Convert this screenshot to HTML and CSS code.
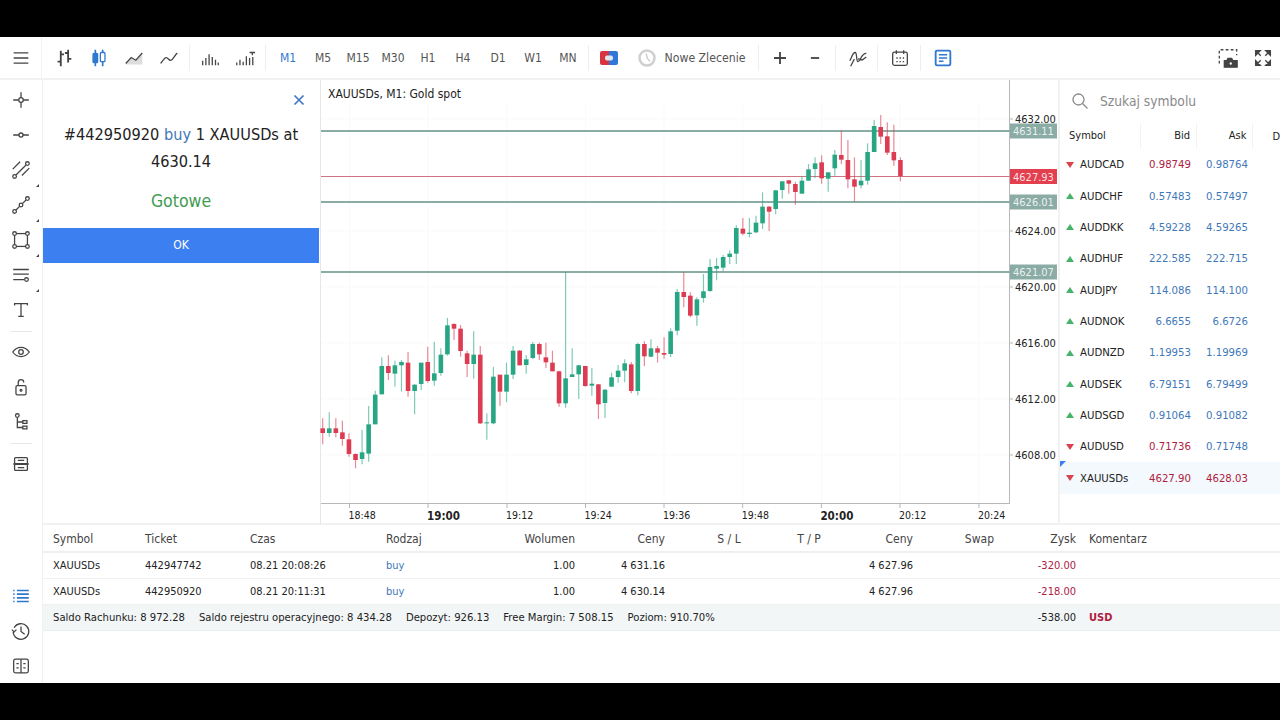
FILE: index.html
```html
<!DOCTYPE html>
<html>
  <head>
    <title>XAUUSDs Trading</title>
    <link rel="stylesheet" href="styles.css">
  </head>
  <body>
    <div class="black-bar top"></div>

    <header class="toolbar">
      <div class="tool menu-btn">
        <svg class="icon" viewBox="0 0 24 24"><path d="M4 6.5h16M4 12h16M4 17.5h16"/></svg>
      </div>
      <div class="tool-group first">
        <div class="tool"><svg class="icon" viewBox="0 0 24 24"><path d="M8.5 4v17M8.5 8H12M5 16h3.5M16.5 3v14M13 6.5h3.5M16.5 13H20" stroke-width="2"/></svg></div>
        <div class="tool"><svg class="icon blue" viewBox="0 0 24 24"><path d="M8 3v18M16 3v18" stroke-width="1.8"/><rect x="5.5" y="7" width="5" height="10" rx="1" class="fill-blue"/><rect x="13.5" y="6" width="5" height="10" rx="1" class="fill-white"/></svg></div>
        <div class="tool"><svg class="icon" viewBox="0 0 24 24"><path d="M3 19l6-7 5 3 7-8v12H3z" class="fill-grey"/><path d="M3 18l6-6.5 5 3 7-8"/></svg></div>
        <div class="tool"><svg class="icon" viewBox="0 0 24 24"><path d="M3 18c2-3 4-6.5 6-6.5s3 3.5 5 3c2.5-.5 4-5.5 7-8"/></svg></div>
      </div>
      <div class="tool-sep"></div>
      <div class="tool-group">
        <div class="tool"><svg class="icon" viewBox="0 0 24 24"><path d="M4 20v-5M7.5 20v-8M11 20V8M14.5 20v-9M18 20v-6M21 20v-3"/></svg></div>
        <div class="tool"><svg class="icon" viewBox="0 0 24 24"><path d="M3 20v-3M6.5 20v-6M10 20v-4M13.5 20V10M17 20v-8M20.5 20v-9M17 6h6M20 6v3"/></svg></div>
      </div>
      <div class="tool-sep"></div>
      <div class="tool-group periods">
        <div class="tool period active">M1</div>
        <div class="tool period">M5</div>
        <div class="tool period">M15</div>
        <div class="tool period">M30</div>
        <div class="tool period">H1</div>
        <div class="tool period">H4</div>
        <div class="tool period">D1</div>
        <div class="tool period">W1</div>
        <div class="tool period">MN</div>
      </div>
      <div class="tool-sep"></div>
      <div class="tool">
        <svg width="18" height="14" viewBox="0 0 18 14"><path d="M2 0h7v14H2a2 2 0 0 1-2-2V2a2 2 0 0 1 2-2z" fill="#d8343f"/><path d="M9 0h7a2 2 0 0 1 2 2v10a2 2 0 0 1-2 2H9z" fill="#2f78d8"/><rect x="5" y="4.5" width="8" height="5" rx="2" fill="#dfe6ee"/></svg>
      </div>
      <div class="new-order">
        <svg width="18" height="18" viewBox="0 0 18 18"><circle cx="9" cy="9" r="7.5" fill="none" stroke="#cfcfcf" stroke-width="2.5"/><path d="M8 4.5l1.5 5 2.5 3" fill="none" stroke="#cfcfcf" stroke-width="1.5"/></svg>
        <span>Nowe Zlecenie</span>
      </div>
      <div class="tool-sep wide"></div>
      <div class="tool-group">
        <div class="tool"><svg class="icon" viewBox="0 0 24 24"><path d="M12 5.5v13M5.5 12h13" stroke-width="2"/></svg></div>
        <div class="tool"><svg class="icon" viewBox="0 0 24 24"><path d="M7.5 12h9" stroke-width="2"/></svg></div>
      </div>
      <div class="tool-sep loose"></div>
      <div class="tool"><svg class="icon" viewBox="0 0 24 24"><path d="M3 15c2-3 3-9 6-9 2 0 1 10 3 10 3 0 3-9 9-9M4 21l4-8M12 13l5 1 4-3"/></svg></div>
      <div class="tool-sep loose"></div>
      <div class="tool"><svg class="icon" viewBox="0 0 24 24"><rect x="4" y="5.5" width="16" height="14.5" rx="2"/><path d="M8 3.5v4M16 3.5v4M8 12h1.5M11.5 12H13M15 12h1.5M8 16h1.5M11.5 16H13M15 16h1.5"/></svg></div>
      <div class="tool-sep loose"></div>
      <div class="tool"><svg class="icon blue" viewBox="0 0 24 24"><rect x="4" y="4" width="16" height="16" rx="1.5" stroke-width="2"/><path d="M7.5 8.5h9M7.5 12h9M7.5 15.5h5" stroke-width="1.8"/></svg></div>
      <div class="toolbar-right">
        <div class="tool"><svg class="icon" viewBox="0 0 24 24"><path d="M2.5 18V3h19v6" stroke-dasharray="3 2.5"/><path d="M8 22v-7h2.5l1.5-2.5h4l1.5 2.5H22v7z" class="fill-dark"/><circle cx="15" cy="18" r="2" class="fill-white"/></svg></div>
        <div class="tool"><svg class="icon" viewBox="0 0 24 24"><path d="M9.5 9.5L5 5M4 9V4h5zM14.5 9.5L19 5M20 9V4h-5zM9.5 14.5L5 19M4 15v5h5zM14.5 14.5L19 19M20 15v5h-5z" class="fill-dark" stroke-width="1.5"/></svg></div>
      </div>
    </header>

    <div class="app">
      <nav class="sidebar">
        <div class="side-btn"><svg class="icon" viewBox="0 0 24 24"><circle cx="12" cy="12" r="2.5"/><path d="M12 3.5v6M12 14.5v6M3.5 12h6M14.5 12h6"/></svg></div>
        <div class="side-btn"><svg class="icon" viewBox="0 0 24 24"><circle cx="12" cy="12" r="2.2"/><path d="M3.5 12h6.3M14.2 12h6.3"/></svg></div>
        <div class="side-btn more"><svg class="icon" viewBox="0 0 24 24"><circle cx="19" cy="5" r="2"/><circle cx="5" cy="19" r="2"/><path d="M17.5 6.5L6.5 17.5M21 10l-8 8M11 3L3 11"/></svg></div>
        <div class="side-btn more"><svg class="icon" viewBox="0 0 24 24"><circle cx="19" cy="5" r="2"/><circle cx="12" cy="12" r="2"/><circle cx="5" cy="19" r="2"/><path d="M17.5 6.5l-4 4M10.5 13.5l-4 4"/></svg></div>
        <div class="side-btn more"><svg class="icon" viewBox="0 0 24 24"><rect x="5" y="5" width="14" height="14"/><circle cx="5" cy="5" r="2" class="fill-white"/><circle cx="19" cy="5" r="2" class="fill-white"/><circle cx="5" cy="19" r="2" class="fill-white"/><circle cx="19" cy="19" r="2" class="fill-white"/></svg></div>
        <div class="side-btn more"><svg class="icon" viewBox="0 0 24 24"><path d="M3.5 6h17M3.5 11h17M3.5 17h12"/><circle cx="18" cy="17" r="2" class="fill-white"/></svg></div>
        <div class="side-btn"><svg class="icon" viewBox="0 0 24 24"><path d="M5 7V5h14v2M12 5v14M9 19h6"/></svg></div>
        <div class="side-sep"></div>
        <div class="side-btn"><svg class="icon" viewBox="0 0 24 24"><path d="M3 12c2.5-3.5 5.5-5 9-5s6.5 1.5 9 5c-2.5 3.5-5.5 5-9 5s-6.5-1.5-9-5z"/><circle cx="12" cy="12" r="2.5"/></svg></div>
        <div class="side-btn"><svg class="icon" viewBox="0 0 24 24"><rect x="6.5" y="10.5" width="11" height="10" rx="1.5"/><path d="M9 10.5V7a3 3 0 0 1 6 0"/><circle cx="12" cy="15.5" r="1"/></svg></div>
        <div class="side-btn"><svg class="icon" viewBox="0 0 24 24"><circle cx="8" cy="5" r="2"/><path d="M8 7v11h6M8 12h6"/><rect x="14" y="10.5" width="4.5" height="3"/><rect x="14" y="16.5" width="4.5" height="3"/></svg></div>
        <div class="side-sep"></div>
        <div class="side-btn"><svg class="icon" viewBox="0 0 24 24"><rect x="5" y="5" width="14" height="6.5" rx="1"/><rect x="5" y="12.5" width="14" height="6.5" rx="1"/><path d="M8.5 8h7M8.5 16h7M3.5 12h17"/></svg></div>
        <div class="side-bottom">
          <div class="side-btn"><svg class="icon blue" viewBox="0 0 24 24"><path d="M7.5 6h13M7.5 10h13M7.5 14h13M7.5 18h13M3.5 6H5M3.5 10H5M3.5 14H5M3.5 18H5" stroke-width="1.8"/></svg></div>
          <div class="side-btn"><svg class="icon" viewBox="0 0 24 24"><path d="M4.5 8.5a8.5 8.5 0 1 1-1 4.5M2 10.5L4.5 13 7 10.5M12 7v5.5l4 3"/></svg></div>
          <div class="side-btn"><svg class="icon" viewBox="0 0 24 24"><rect x="4" y="4.5" width="16" height="15" rx="2"/><path d="M12 4.5v15M7 9.5h2.5M7 14h2.5M14.5 9.5H17M14.5 14H17"/></svg></div>
        </div>
      </nav>

      <main class="workspace">
        <div class="top-panels">
          <section class="order-dialog">
            <div class="dialog-close">
              <svg width="12" height="12" viewBox="0 0 12 12"><path d="M1.5 1.5l9 9M10.5 1.5l-9 9" stroke="#3f78c8" stroke-width="1.7" fill="none"/></svg>
            </div>
            <p class="dialog-msg">#442950920 <span class="buy">buy</span> 1 XAUUSDs at 4630.14</p>
            <p class="dialog-status">Gotowe</p>
            <div class="dialog-ok">OK</div>
          </section>

          <section class="chart">
            <svg id="chart-svg" class="chart-svg" viewBox="320 80 738 445" width="738" height="445"></svg>
          </section>

          <aside class="watchlist">
            <div class="search">
              <svg width="18" height="18" viewBox="0 0 18 18"><circle cx="7.5" cy="7.5" r="5.5" fill="none" stroke="#8a8a8a" stroke-width="1.3"/><path d="M11.5 11.5l5 5" stroke="#8a8a8a" stroke-width="1.3"/></svg>
              <span>Szukaj symbolu</span>
            </div>
            <div class="quote-head">
              <div class="q-symbol">Symbol</div>
              <div class="q-bid">Bid</div>
              <div class="q-ask">Ask</div>
              <div class="q-rest">D</div>
            </div>
            <div class="quote-row"><i class="arrow down"></i><div class="name">AUDCAD</div><div class="q-bid red">0.98749</div><div class="q-ask blue">0.98764</div></div>
            <div class="quote-row"><i class="arrow up"></i><div class="name">AUDCHF</div><div class="q-bid blue">0.57483</div><div class="q-ask blue">0.57497</div></div>
            <div class="quote-row"><i class="arrow up"></i><div class="name">AUDDKK</div><div class="q-bid blue">4.59228</div><div class="q-ask blue">4.59265</div></div>
            <div class="quote-row"><i class="arrow up"></i><div class="name">AUDHUF</div><div class="q-bid blue">222.585</div><div class="q-ask blue">222.715</div></div>
            <div class="quote-row"><i class="arrow up"></i><div class="name">AUDJPY</div><div class="q-bid blue">114.086</div><div class="q-ask blue">114.100</div></div>
            <div class="quote-row"><i class="arrow up"></i><div class="name">AUDNOK</div><div class="q-bid blue">6.6655</div><div class="q-ask blue">6.6726</div></div>
            <div class="quote-row"><i class="arrow up"></i><div class="name">AUDNZD</div><div class="q-bid blue">1.19953</div><div class="q-ask blue">1.19969</div></div>
            <div class="quote-row"><i class="arrow up"></i><div class="name">AUDSEK</div><div class="q-bid blue">6.79151</div><div class="q-ask blue">6.79499</div></div>
            <div class="quote-row"><i class="arrow up"></i><div class="name">AUDSGD</div><div class="q-bid blue">0.91064</div><div class="q-ask blue">0.91082</div></div>
            <div class="quote-row"><i class="arrow down"></i><div class="name">AUDUSD</div><div class="q-bid red">0.71736</div><div class="q-ask blue">0.71748</div></div>
            <div class="quote-row selected"><i class="arrow down"></i><div class="name">XAUUSDs</div><div class="q-bid red">4627.90</div><div class="q-ask red">4628.03</div></div>
          </aside>
        </div>

        <section class="positions">
          <div class="pos-row pos-head">
            <div>Symbol</div><div>Ticket</div><div>Czas</div><div>Rodzaj</div>
            <div class="right">Wolumen</div><div class="right">Ceny</div><div class="center">S / L</div><div class="center">T / P</div>
            <div class="right">Ceny</div><div class="right">Swap</div><div class="right">Zysk</div><div class="comment">Komentarz</div>
          </div>
          <div class="pos-row">
            <div>XAUUSDs</div><div>442947742</div><div>08.21 20:08:26</div><div class="buy">buy</div>
            <div class="right">1.00</div><div class="right">4 631.16</div><div></div><div></div>
            <div class="right">4 627.96</div><div></div><div class="right loss">-320.00</div><div></div>
          </div>
          <div class="pos-row">
            <div>XAUUSDs</div><div>442950920</div><div>08.21 20:11:31</div><div class="buy">buy</div>
            <div class="right">1.00</div><div class="right">4 630.14</div><div></div><div></div>
            <div class="right">4 627.96</div><div></div><div class="right loss">-218.00</div><div></div>
          </div>
          <div class="pos-total">
            <div class="balance">
              <span>Saldo Rachunku: 8 972.28</span>
              <span>Saldo rejestru operacyjnego: 8 434.28</span>
              <span>Depozyt: 926.13</span>
              <span>Free Margin: 7 508.15</span>
              <span>Poziom: 910.70%</span>
            </div>
            <div class="total-profit">-538.00</div>
            <div class="currency">USD</div>
          </div>
        </section>
      </main>
    </div>

    <div class="black-bar bottom"></div>

    <script src="chart.js"></script>
  </body>
</html>
```

FILE: styles.css
```css
* {
  box-sizing: border-box;
}

html,
body {
  margin: 0;
  height: 720px;
  overflow: hidden;
}

body {
  display: flex;
  flex-direction: column;
  background-color: #fff;
  color: #222;
  font-family: "DejaVu Sans", "Noto Sans", sans-serif;
  font-stretch: condensed;
  font-size: 11px;
}

.black-bar {
  background-color: #000;
  flex: none;
}

.black-bar.top {
  height: 37px;
}

.black-bar.bottom {
  height: 37px;
}

/* shared icon look */
.icon {
  width: 22px;
  height: 22px;
  fill: none;
  stroke: #444;
  stroke-width: 1.4;
}

.icon.blue {
  stroke: #2f78d0;
}

.fill-blue {
  fill: #2f78d0;
}

.fill-white {
  fill: #fff;
}

.fill-grey {
  fill: #ddd;
  stroke: none;
}

.fill-dark {
  fill: #444;
}

/* top toolbar */
.toolbar {
  display: flex;
  align-items: center;
  flex: none;
  height: 43px;
  border-bottom: 2px solid #f1f1f1;
}

.tool {
  display: flex;
  align-items: center;
  justify-content: center;
  flex: none;
  width: 35px;
  height: 41px;
}

.menu-btn {
  width: 42px;
  border-right: 1px solid #f1f1f1;
}

.tool-group {
  display: flex;
  flex: none;
}

.tool-group.first {
  margin-left: 4.5px;
}

.tool-group.periods {
  margin-left: 2px;
}

.period {
  color: #555;
  font-size: 12px;
}

.period.active {
  color: #2f78d0;
}

.tool-sep {
  flex: none;
  width: 1px;
  height: 26px;
  margin: 0 3px 0 2px;
  background-color: #eee;
}

.tool-sep.wide {
  margin-left: 13px;
  margin-right: 3.5px;
}

.tool-sep.loose {
  margin-right: 4.5px;
}

.new-order {
  display: flex;
  align-items: center;
  gap: 9px;
  flex: none;
  margin-left: 11px;
  color: #555;
  font-size: 12.2px;
}

.toolbar-right {
  display: flex;
  margin-left: auto;
}

/* left drawing tools */
.app {
  display: flex;
  flex: 1;
  min-height: 0;
}

.sidebar {
  display: flex;
  flex-direction: column;
  flex: none;
  width: 43px;
  padding-top: 2.5px;
  border-right: 1px solid #f1f1f1;
}

.side-btn {
  position: relative;
  display: flex;
  align-items: center;
  justify-content: center;
  flex: none;
  width: 42px;
  height: 35px;
}

.side-btn.more::after {
  content: "";
  position: absolute;
  right: 3px;
  bottom: 1px;
  border-style: solid;
  border-width: 0 0 3px 3px;
  border-color: transparent transparent #444 transparent;
}

.side-sep {
  flex: none;
  height: 1px;
  margin: 3px 10px;
  background-color: #e8e8e8;
}

.side-bottom {
  margin-top: auto;
}

/* main area */
.workspace {
  display: flex;
  flex-direction: column;
  flex: 1;
  min-width: 0;
}

.top-panels {
  display: flex;
  flex: none;
  height: 445px;
  border-bottom: 2px solid #f1f1f1;
}

.order-dialog {
  position: relative;
  flex: none;
  width: 277px;
  padding-top: 42px;
  padding-right: 1px;
  text-align: center;
}

.dialog-close {
  position: absolute;
  top: 14px;
  right: 15px;
  line-height: 0;
}

.dialog-msg {
  margin: 0 auto;
  width: 250px;
  font-size: 16.2px;
  line-height: 26.5px;
  color: #222;
}

.buy {
  color: #3f78b8;
}

.dialog-status {
  margin: 13px 0 0;
  font-size: 17.5px;
  line-height: 26px;
  color: #3f9c52;
}

.dialog-ok {
  margin-top: 14px;
  height: 35px;
  line-height: 35px;
  background-color: #3b7ff0;
  color: #fff;
  font-size: 12px;
}

.chart {
  flex: none;
  width: 738px;
  height: 445px;
}

.chart-svg {
  display: block;
}

.chart-svg text {
  font-family: "DejaVu Sans", "Noto Sans", sans-serif;
  font-stretch: condensed;
  font-size: 11px;
  fill: #222;
}

.chart-svg .chart-title {
  font-size: 12px;
}

.chart-svg .time-label {
  font-size: 10.5px;
}

.chart-svg .major {
  font-size: 11.5px;
  font-weight: 700;
}

.chart-svg .tag-text {
  fill: #fff;
  fill-opacity: 0.85;
}

.watchlist {
  flex: 1;
  min-width: 0;
  overflow: hidden;
  border-left: 2px solid #f1f1f1;
}

.search {
  display: flex;
  align-items: center;
  gap: 11px;
  height: 42px;
  padding-left: 11px;
  color: #8a8a8a;
  font-size: 13.7px;
}

.quote-head {
  display: flex;
  align-items: center;
  height: 27px;
  padding-top: 1px;
  font-size: 11px;
}

.quote-head .q-symbol {
  width: 82px;
  padding-left: 9px;
  line-height: 26px;
  border-right: 1px solid #f3f3f3;
}

.quote-head .q-bid,
.quote-head .q-ask {
  width: 57px;
  padding-right: 6px;
  text-align: right;
  line-height: 26px;
  border-right: 1px solid #f3f3f3;
}

.quote-head .q-rest {
  padding-left: 19px;
}

.quote-row {
  display: flex;
  align-items: center;
  height: 31.35px;
  font-size: 11.3px;
}

.quote-row .name {
  width: 67px;
  color: #222;
}

.quote-row .q-bid {
  width: 44px;
  text-align: right;
}

.quote-row .q-ask {
  width: 57px;
  text-align: right;
}

.quote-row.selected {
  position: relative;
  background-color: #f3f9fc;
}

.quote-row.selected::before {
  content: "";
  position: absolute;
  left: 0;
  top: -1px;
  border-style: solid;
  border-width: 6px 6px 0 0;
  border-color: #3b7ff0 transparent transparent transparent;
}

.red {
  color: #b0203f;
}

.blue {
  color: #3f78b8;
}

.arrow {
  flex: none;
  width: 0;
  height: 0;
  margin: 0 6px 0 6px;
  border-left: 4px solid transparent;
  border-right: 4px solid transparent;
}

.arrow.up {
  border-bottom: 6px solid #45b36a;
}

.arrow.down {
  border-top: 6px solid #d8434f;
}

/* positions table */
.positions {
  flex: 1;
}

.pos-row {
  display: grid;
  grid-template-columns: 92px 105px 136px 129px 80px 90px 108px 52px 88px 81px 82px 1fr;
  align-items: center;
  height: 26px;
  border-bottom: 1px solid #f0f0f0;
}

.pos-row > div {
  padding: 0 10px;
}

.pos-head {
  height: 28px;
  padding-top: 2px;
  border-bottom-width: 2px;
  font-size: 12px;
  color: #444;
}

.pos-row > .right {
  text-align: right;
}

.pos-row > .center {
  padding: 0;
  text-align: center;
}

.pos-row > .comment {
  padding: 0 0 0 3px;
  white-space: nowrap;
}

.loss {
  color: #b0203f;
}

.pos-total {
  display: flex;
  align-items: center;
  height: 26px;
  padding-left: 10px;
  background-color: #f2f6f7;
  border-bottom: 1px solid #eaeeee;
}

.balance {
  display: flex;
  gap: 14px;
  flex: none;
  width: 950px;
  font-size: 11.2px;
  white-space: nowrap;
}

.total-profit {
  flex: none;
  width: 73px;
  text-align: right;
}

.currency {
  margin-left: 13px;
  color: #b0203f;
  font-weight: 700;
}
```

FILE: chart.js
```js
const svg = document.getElementById('chart-svg');
const NS = 'http://www.w3.org/2000/svg';

function add(tag, attrs, text) {
  const el = document.createElementNS(NS, tag);
  Object.keys(attrs).forEach((key) => el.setAttribute(key, attrs[key]));
  if (text) el.textContent = text;
  svg.appendChild(el);
  return el;
}

// grid
const timeTicks = [
  [349.5, '18:48'], [428, '19:00', true], [507, '19:12'], [585.5, '19:24'], [664, '19:36'],
  [742.7, '19:48'], [821.4, '20:00', true], [900, '20:12'], [979, '20:24'],
];
const priceTicks = [[119, '4632.00'], [231, '4624.00'], [287, '4620.00'], [343, '4616.00'], [399, '4612.00'], [455, '4608.00']];

timeTicks.forEach(([x]) => add('line', { x1: x, x2: x, y1: 105, y2: 503, stroke: '#f9f9f9' }));
priceTicks.forEach(([y]) => add('line', { x1: 321, x2: 1009, y1: y, y2: y, stroke: '#f9f9f9' }));

// chart frame
add('line', { x1: 320.5, x2: 320.5, y1: 80, y2: 524, stroke: '#e6e6e6' });
add('line', { x1: 1009.5, x2: 1009.5, y1: 80, y2: 504, stroke: '#b8b8b8' });
add('line', { x1: 321, x2: 1010, y1: 503.5, y2: 503.5, stroke: '#b8b8b8' });

add('text', { x: 328, y: 98, class: 'chart-title' }, 'XAUUSDs, M1: Gold spot');

// candles read off as [up?, wickTop, bodyTop, bodyBottom, wickBottom], 3x of the chart pixels
const partOne = [
  [0, 415, 445, 459, 493], [1, 397, 445, 459, 470], [0, 415, 445, 459, 472], [0, 422, 457, 477, 497],
  [0, 460, 478, 522, 530], [0, 520, 522, 540, 565], [1, 450, 517, 537, 553], [1, 378, 433, 521, 545],
  [1, 332, 344, 433, 433], [1, 232, 258, 343, 343], [0, 226, 258, 279, 300], [1, 242, 256, 281, 320],
  [1, 240, 246, 256, 335], [0, 216, 248, 333, 350], [1, 313, 314, 333, 403], [1, 248, 248, 312, 330],
  [0, 200, 246, 303, 308], [1, 185, 280, 302, 317], [1, 205, 224, 279, 287], [1, 114, 136, 223, 227],
  [0, 130, 132, 146, 180], [0, 135, 146, 213, 230], [0, 212, 220, 252, 291], [1, 154, 224, 252, 296],
  [0, 198, 224, 430, 432], [1, 400, 427, 430, 479], [1, 261, 290, 430, 433], [0, 284, 284, 335, 377],
  [1, 248, 284, 335, 367], [1, 198, 212, 284, 297], [0, 210, 212, 256, 256], [1, 225, 238, 255, 281],
  [1, 186, 192, 234, 238], [0, 188, 192, 223, 240], [0, 188, 232, 247, 264], [0, 212, 248, 274, 274],
  [0, 272, 274, 370, 380], [1, -24, 295, 370, 383], [1, 205, 283, 291, 291], [1, 255, 256, 283, 357],
  [0, 258, 258, 318, 320], [1, 264, 311, 317, 347], [0, 312, 313, 373, 417], [1, 328, 329, 369, 414],
  [1, 278, 292, 320, 320], [1, 255, 272, 291, 308], [1, 238, 250, 272, 307], [0, 246, 253, 333, 340],
  [1, 188, 192, 333, 346], [0, 184, 192, 229, 258], [1, 178, 205, 230, 232], [0, 198, 205, 218, 248],
  [0, 172, 219, 224, 236], [1, 145, 154, 222, 232],
];
const partTwo = [
  [1, 567, 576, 692, 706], [0, 517, 576, 591, 622], [0, 577, 587, 647, 652], [1, 592, 598, 646, 677],
  [1, 522, 574, 594, 608], [1, 477, 501, 573, 575], [1, 474, 498, 506, 541], [1, 465, 471, 503, 513],
  [1, 451, 461, 471, 492], [1, 376, 384, 461, 492], [0, 354, 386, 401, 406], [1, 354, 398, 402, 412],
  [1, 347, 368, 397, 400], [1, 277, 320, 370, 387], [0, 318, 320, 335, 393], [1, 270, 271, 327, 343],
  [1, 243, 244, 270, 296], [0, 240, 241, 251, 281], [0, 246, 252, 276, 314], [1, 228, 242, 281, 281],
  [1, 192, 208, 242, 242], [1, 172, 190, 207, 234], [0, 166, 187, 235, 251], [1, 217, 217, 236, 275],
  [1, 150, 164, 205, 227], [0, 92, 165, 179, 192], [0, 120, 180, 238, 265], [0, 172, 238, 260, 305],
  [1, 180, 242, 256, 265], [1, 130, 156, 242, 254], [1, 60, 78, 156, 156], [0, 45, 81, 110, 132],
  [0, 67, 109, 158, 165], [0, 74, 156, 181, 197], [0, 172, 180, 228, 244],
];

const candles = partOne
  .map((c) => [c[0], ...c.slice(1).map((v) => 280 + v / 3)])
  .concat(partTwo.map((c) => [c[0], ...c.slice(1).map((v) => 100 + v / 3)]));

// price levels go under the candles
const levels = [
  [131, '4631.11', '#8aaca5', 2],
  [176.5, '4627.93', '#cf7482', 1],
  [202, '4626.01', '#8aaca5', 2],
  [272, '4621.07', '#8aaca5', 2],
];

levels.forEach(([y, , color, width]) => {
  add('line', { x1: 321, x2: 1010, y1: y, y2: y, stroke: color, 'stroke-width': width });
});

candles.forEach(([up, wickTop, bodyTop, bodyBottom, wickBottom], i) => {
  const x = 322.7 + i * 6.565;
  const color = up ? '#28a683' : '#dc3b52';
  add('line', { x1: x, x2: x, y1: wickTop, y2: wickBottom, stroke: color, 'stroke-width': 1.2, 'stroke-opacity': 0.6 });
  add('rect', { x: x - 2.3, y: bodyTop, width: 4.6, height: Math.max(bodyBottom - bodyTop, 1), fill: color });
});

// axes
priceTicks.forEach(([y, label]) => {
  add('line', { x1: 1010, x2: 1013, y1: y, y2: y, stroke: '#b8b8b8' });
  add('text', { x: 1015, y: y + 4 }, label);
});

timeTicks.forEach(([x, label, major]) => {
  add('line', { x1: x, x2: x, y1: 504, y2: 508, stroke: '#b8b8b8' });
  add('text', { x: x - 1, y: major ? 520 : 519, class: major ? 'major' : 'time-label' }, label);
});

levels.forEach(([y, label, color]) => {
  const fill = label === '4627.93' ? '#e2404f' : color;
  add('rect', { x: 1010, y: y - 7.5, width: 47, height: 15, fill: fill });
  add('text', { x: 1013, y: y + 4, class: 'tag-text' }, label);
});
```
